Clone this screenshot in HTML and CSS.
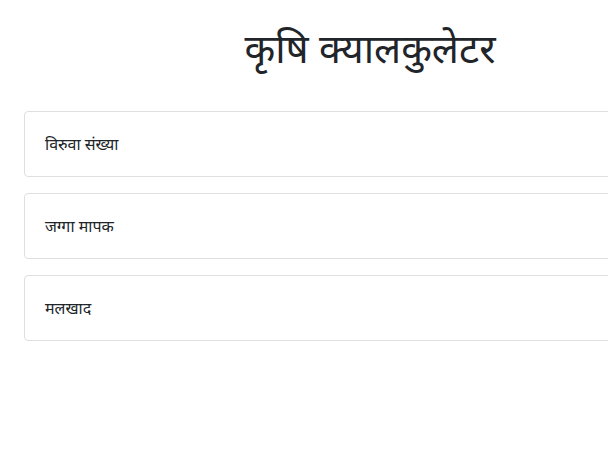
FILE: index.html
```html
<!DOCTYPE html>
<html lang="ne">
<head>
<meta charset="utf-8">
<title>कृषि क्यालकुलेटर</title>
<link rel="stylesheet" href="styles.css">
</head>
<body>
<div class="container">
  <h1 class="title">कृषि क्यालकुलेटर</h1>
  <div class="list">
    <div class="card">विरुवा संख्या</div>
    <div class="card">जग्गा मापक</div>
    <div class="card">मलखाद</div>
  </div>
</div>
</body>
</html>
```
FILE: styles.css
```css
html, body {
  margin: 0;
  padding: 0;
  overflow: hidden;
  background: #fff;
}
body {
  font-family: "Noto Sans", "Open Sans", sans-serif;
  color: #212529;
}
.container {
  width: 692px;
  padding: 24px 0 0 24px;
}
.title {
  margin: 0 0 39px;
  font-size: 40px;
  font-weight: 400;
  line-height: 48px;
  text-align: center;
}
.list {
  display: flex;
  flex-direction: column;
  gap: 16px;
}
.card {
  border: 1px solid #dfdfdf;
  border-radius: 4px;
  padding: 20px;
  font-size: 16px;
  line-height: 24px;
}
```
